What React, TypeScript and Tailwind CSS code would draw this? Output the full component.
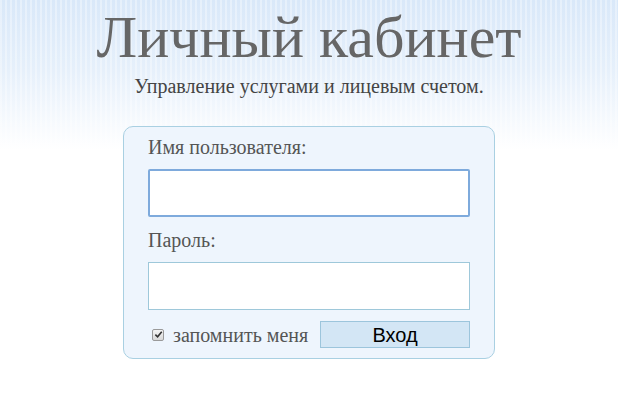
import React from 'react';

const serif = { fontFamily: '"Liberation Serif", "Times New Roman", serif' };

export default function App() {
  return (
    <div
      className="min-h-screen w-full bg-white bg-[repeating-linear-gradient(90deg,rgba(255,255,255,0.35)_0px,rgba(255,255,255,0.35)_2px,rgba(255,255,255,0)_2px,rgba(255,255,255,0)_5px),linear-gradient(to_bottom,#d9e8f9_0px,#e6f0fb_70px,#ffffff_150px)] bg-no-repeat flex flex-col items-center"
      style={serif}
    >
      <h1 className="mt-[7px] text-[60px] leading-none text-[#666666] font-normal">Личный кабинет</h1>
      <p className="mt-[9px] text-[20px] leading-none text-[#444444]">
        Управление услугами и лицевым счетом.
      </p>

      <form
        className="mt-[30px] w-[372px] h-[233px] rounded-[10px] border border-[#a9d0e2] bg-[#eef5fd] px-[24px] pt-[8px] flex flex-col"
        onSubmit={(e) => e.preventDefault()}
      >
        <label className="text-[20px] leading-[24px] text-[#555555]">Имя пользователя:</label>
        <input
          type="text"
          className="mt-[10px] h-[48px] w-full bg-white border-2 border-[#7eaadc] rounded-[2px] outline-none"
        />
        <label className="mt-[11px] text-[20px] leading-[24px] text-[#555555]">Пароль:</label>
        <input
          type="password"
          className="mt-[10px] h-[48px] w-full bg-white border border-[#9ec8da] outline-none"
        />
        <div className="mt-[11px] flex items-center">
          <label className="flex items-center gap-[9px] text-[20px] leading-none text-[#555555]">
            <span className="ml-[4px] w-[12px] h-[12px] rounded-[2px] border border-[#9a9a9a] bg-gradient-to-b from-[#f4f4f4] to-[#d8d8d8] flex items-center justify-center">
              <svg width="9" height="9" viewBox="0 0 10 10">
                <path d="M1.5 5.2 L4 7.6 L8.6 2" fill="none" stroke="#333" strokeWidth="1.8" />
              </svg>
            </span>
            запомнить меня
          </label>
          <button
            type="submit"
            className="ml-auto w-[150px] h-[27px] bg-[#d3e6f5] border border-[#9cc5dc] text-[20px] leading-none text-black"
            style={{ fontFamily: '"Liberation Sans", Arial, sans-serif' }}
          >
            Вход
          </button>
        </div>
      </form>
    </div>
  );
}
